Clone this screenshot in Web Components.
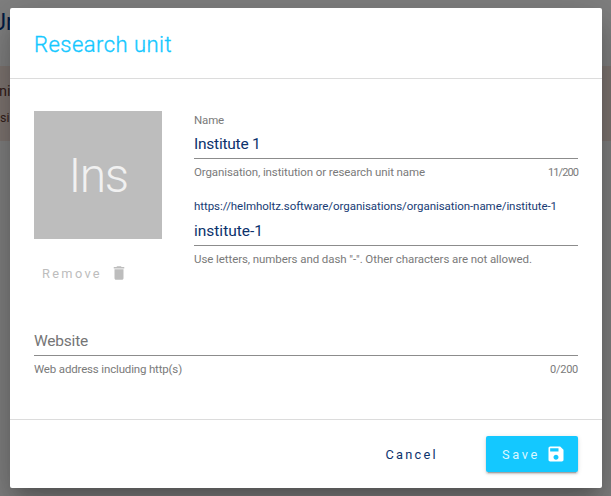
<!DOCTYPE html>
<html lang="en">
<head>
<meta charset="utf-8">
<title>Research unit</title>
<style>
html,body{margin:0;height:100%;overflow:hidden;background:#fff;font-family:Roboto,"Liberation Sans",sans-serif}
</style>
</head>
<body>
<research-page></research-page>
<script>
const define = (name, html, setup) => customElements.define(name, class extends HTMLElement {
  connectedCallback() {
    if (this.shadowRoot) return;
    const t = document.createElement('template');
    t.innerHTML = html;
    this.attachShadow({mode: 'open'}).append(t.content.cloneNode(true));
    if (setup) setup(this, this.shadowRoot);
  }
});

// A single line of text whose tracking is adjusted to a given measure.
define('tracked-text', `<style>:host{display:block;white-space:pre}span{display:inline-block}</style><span><slot></slot></span>`, (el, root) => {
  const span = root.querySelector('span');
  const n = el.textContent.length;
  const gap = (Number(el.getAttribute('measure')) - span.getBoundingClientRect().width) / n;
  span.style.letterSpacing = gap.toFixed(3) + 'px';
});

define('text-field', `<style>
:host{display:block;color:#7a7a7a;font-size:11.5px}
.label{height:18px;line-height:18px}
.value{height:30px;line-height:31px;box-sizing:border-box;border-bottom:1px solid #8c8c8c;font-size:15.5px;color:#0c326c}
.help{display:flex;justify-content:space-between;margin-top:5px;line-height:17px}
::slotted([slot=count]){font-size:11px}
:host([empty]) .value{color:#757575}
:host([empty]) .label{display:none}
:host([link]) .label{color:#173b74;height:19px}
</style>
<div class="label"><slot name="label"></slot></div>
<div class="value"><slot name="value"></slot></div>
<div class="help"><slot name="help"></slot><slot name="count"></slot></div>`);

define('unit-avatar', `<style>
:host{display:flex;width:128px;height:128px;background:#bdbdbd;color:#f1f1f1;align-items:center;justify-content:center;font-size:48px;font-weight:300;line-height:1;padding-top:2px;box-sizing:border-box}
</style><slot></slot>`);

define('action-button', `<style>
:host{display:flex;align-items:center;justify-content:space-between;box-sizing:border-box;height:36px;color:#0c326c;font-size:12.8px}
:host([primary]){width:92px;padding:0 13px 0 16px;background:#14c8ff;color:#dcf7ff;border-radius:2px;box-shadow:0 3px 1px -2px rgba(0,0,0,.2),0 2px 2px rgba(0,0,0,.14),0 1px 5px rgba(0,0,0,.12)}
:host([disabled]){color:#bdbdbd;width:128px;padding:0 34px 0 8px}
::slotted(svg){width:18px;height:18px;fill:currentColor}
:host([primary]) ::slotted(svg){width:20px;height:20px;color:#fff;margin-right:-1px}
</style><slot></slot><slot name="icon"></slot>`);

define('modal-dialog', `<style>
:host{display:flex;flex-direction:column;box-sizing:border-box;width:592px;height:480px;background:#fff;border-radius:2px;box-shadow:0 11px 15px -7px rgba(0,0,0,.2),0 24px 38px 3px rgba(0,0,0,.14),0 9px 46px 8px rgba(0,0,0,.12)}
header{height:70px;padding:0 24px;display:flex;align-items:center;font-size:22px;font-weight:300;color:#14c8ff;padding-top:2px;box-sizing:border-box;-webkit-text-stroke:.35px #14c8ff}
main{flex:1;border:solid #dcdcdc;border-width:1px 0;padding:32px 24px 0}
footer{height:68px;display:flex;align-items:center;justify-content:flex-end;gap:48px;padding-right:24px}
</style>
<header><slot name="title"></slot></header><main><slot></slot></main><footer><slot name="actions"></slot></footer>`);

define('page-backdrop', `<style>
:host{display:block;width:611px;height:496px;overflow:hidden;background:#808080}
h1{margin:0;height:66px;font-size:23px;font-weight:400;line-height:45px;color:#001a44;text-indent:-9px}
section{height:75px;background:#7e7571;color:#33201a;font-size:14.5px;line-height:25px;box-sizing:border-box;padding-top:13px}
p{margin:0;text-indent:-1px}
small{display:block;font-size:12.5px;line-height:28px}
</style><h1>Un</h1><section><p>ni</p><small>si</small></section>`);

define('research-page', `<style>
:host{display:grid;width:611px;height:496px;overflow:hidden}
page-backdrop,.layer{grid-area:1/1}
.layer{padding:8px 0 0 10px}
.top{display:grid;grid-template-columns:128px 384px;gap:32px;height:215px}
.fields{display:grid;align-content:start;gap:16px}
.logo{display:grid;align-content:start;gap:16px}
</style>
<page-backdrop></page-backdrop>
<div class="layer"><modal-dialog>
<tracked-text slot="title" measure="138">Research unit</tracked-text>
<div class="top">
<div class="logo">
<unit-avatar><tracked-text measure="59">Ins</tracked-text></unit-avatar>
<action-button disabled><tracked-text measure="60">Remove</tracked-text><svg slot="icon" viewBox="0 0 24 24"><path d="M6 19c0 1.1.9 2 2 2h8c1.1 0 2-.9 2-2V7H6v12zM19 4h-3.5l-1-1h-5l-1 1H5v2h14V4z"/></svg></action-button>
</div>
<div class="fields">
<text-field><tracked-text slot="label" measure="30">Name</tracked-text><tracked-text slot="value" measure="66.5">Institute 1</tracked-text><tracked-text slot="help" measure="231">Organisation, institution or research unit name</tracked-text><tracked-text slot="count" measure="30">11/200</tracked-text></text-field>
<text-field link><tracked-text slot="label" measure="363">https://helmholtz.software/organisations/organisation-name/institute-1</tracked-text><tracked-text slot="value" measure="69">institute-1</tracked-text><tracked-text slot="help" measure="338">Use letters, numbers and dash "-". Other characters are not allowed.</tracked-text></text-field>
</div></div>
<text-field empty><tracked-text slot="value" measure="54">Website</tracked-text><tracked-text slot="help" measure="148">Web address including http(s)</tracked-text><tracked-text slot="count" measure="28">0/200</tracked-text></text-field>
<action-button slot="actions"><tracked-text measure="52.5">Cancel</tracked-text></action-button>
<action-button slot="actions" primary><tracked-text measure="38">Save</tracked-text><svg slot="icon" viewBox="0 0 24 24"><path d="M17 3H5c-1.11 0-2 .9-2 2v14c0 1.1.89 2 2 2h14c1.1 0 2-.9 2-2V7l-4-4zm-5 16c-1.66 0-3-1.34-3-3s1.34-3 3-3 3 1.34 3 3-1.34 3-3 3zm3-10H5V5h10v4z"/></svg></action-button>
</modal-dialog></div>`);
</script>
</body>
</html>
